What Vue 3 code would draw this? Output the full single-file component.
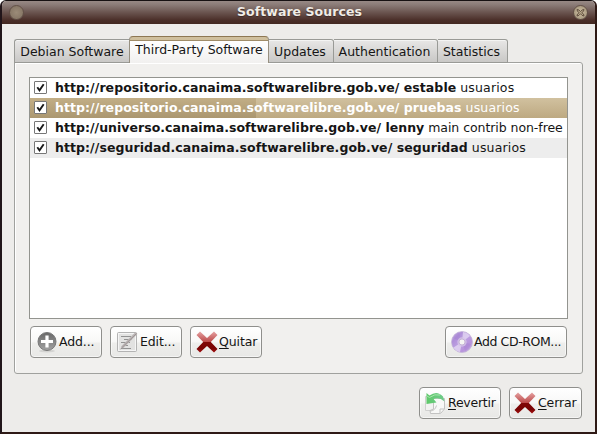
<script setup>
const tabs = [
  { name: 'Debian Software', id: 'debian' },
  { name: 'Third-Party Software', id: 'third', active: true },
  { name: 'Updates', id: 'updates' },
  { name: 'Authentication', id: 'auth' },
  { name: 'Statistics', id: 'stats' },
]
const sources = [
  { id: 'r1', url: 'http://repositorio.canaima.softwarelibre.gob.ve/ estable', parts: 'usuarios' },
  { id: 'r2', url: 'http://repositorio.canaima.softwarelibre.gob.ve/ pruebas', parts: 'usuarios', selected: true },
  { id: 'r3', url: 'http://universo.canaima.softwarelibre.gob.ve/ lenny', parts: 'main contrib non-free' },
  { id: 'r4', url: 'http://seguridad.canaima.softwarelibre.gob.ve/ seguridad', parts: 'usuarios' },
]
</script>

<template>
  <div class="desktop">
    <div class="window">
      <header class="titlebar">
        <span class="orb"></span>
        <span class="title">Software Sources</span>
        <span class="orb close">
          <svg width="15" height="15" viewBox="0 0 15 15"><path d="M4 4.500 6 5 7.500 6.700 9 5 11 4.500 10.300 6.500 8.700 7.700 10.500 9 11 11 9 10.300 7.500 8.700 6 10.300 4 11 4.500 9 6.300 7.700 4.600 6.500Z" fill="#b9a98b" stroke="#5b4a3b" stroke-width=".9" /></svg>
        </span>
      </header>

      <nav class="tabs">
        <div v-for="t in tabs" :key="t.id" class="tab" :class="[t.id, { active: t.active }]"><span>{{ t.name }}</span></div>
      </nav>

      <section class="panel">
        <div class="list">
          <div v-for="s in sources" :key="s.id" class="row" :class="[s.id, { selected: s.selected }]">
            <span class="check">
              <svg width="11" height="11" viewBox="0 0 11 11"><path d="M2.300 5.300 4.500 8.300 8.700 2.200" fill="none" stroke="#1a1a1a" stroke-width="1.900" /></svg>
            </span>
            <span class="text"><b>{{ s.url }}</b> <span class="parts">{{ s.parts }}</span></span>
          </div>
        </div>
        <div class="actions">
          <button class="btn add">
            <svg width="22" height="22" viewBox="0 0 22 22">
              <defs><linearGradient id="plusg" x1="0" y1="0" x2="0" y2="1"><stop offset="0" stop-color="#686868" /><stop offset="1" stop-color="#a2a2a2" /></linearGradient></defs>
              <ellipse cx="11" cy="20" rx="8" ry="1.500" fill="#d4d4d2" />
              <circle cx="11" cy="10.500" r="9" fill="url(#plusg)" stroke="#777" />
              <path d="M11 4.500V16.500M5 10.500H17" stroke="#fff" stroke-width="3.200" />
            </svg><span class="label">Add...</span>
          </button>
          <button class="btn edit">
            <svg width="22" height="22" viewBox="0 0 22 22">
              <rect x="1.500" y="1.500" width="19" height="19" rx="1" fill="#e2e2e1" stroke="#b3b3b3" />
              <rect x="2.500" y="2.500" width="17" height="17" fill="none" stroke="#f5f5f5" />
              <path d="M5 5.500H15M8 8.500H16M5 11.500H14M8 14.500H12M5 17.500H15" stroke="#929292" stroke-width="1" />
              <path d="M20.500 2 6 16.500" stroke="#bcb6b6" stroke-width="2.600" />
              <path d="M20.500 2.500 4.500 18" stroke="#9c9494" stroke-width="1" />
            </svg><span class="label">Edit...</span>
          </button>
          <button class="btn quit">
            <svg width="22" height="22" viewBox="0 0 22 22">
              <defs><linearGradient id="redx" x1="0" y1="0" x2="0" y2="1"><stop offset="0" stop-color="#e5a2a2" /><stop offset=".48" stop-color="#bd4b4b" /><stop offset=".52" stop-color="#7f0707" /><stop offset=".8" stop-color="#790303" /><stop offset="1" stop-color="#a51111" /></linearGradient></defs>
              <path d="M.5 4 4 .5 11 7 18 .5 21.500 4 14.800 11 21.500 18 18 21.500 11 15 4 21.500 .5 18 7.200 11Z" fill="url(#redx)" />
            </svg><span class="label"><i>Q</i>uitar</span>
          </button>
          <button class="btn cd">
            <svg width="22" height="22" viewBox="0 0 22 22">
              <defs><linearGradient id="disc" x1="0" y1="0" x2="1" y2="1"><stop offset="0" stop-color="#ded2f0" /><stop offset=".25" stop-color="#af8fd9" /><stop offset=".48" stop-color="#bda0e2" /><stop offset=".72" stop-color="#b894dc" /><stop offset="1" stop-color="#cdb8e6" /></linearGradient></defs>
              <circle cx="11" cy="11" r="10.500" fill="url(#disc)" stroke="#c2b3d6" stroke-width=".7" />
              <path d="M11 11 12 1A10 10 0 0 1 19 5ZM11 11 2.500 16.500A10 10 0 0 0 9 21Z" fill="#ede5f7" opacity=".65" />
              <path d="M11 11 2 7A10 10 0 0 1 8 1.500ZM11 11 20 13A10 10 0 0 1 14 20Z" fill="#9e7cce" opacity=".3" />
              <circle cx="11" cy="11" r="4.700" fill="#d6c5e7" opacity=".8" />
              <circle cx="11" cy="11" r="3" fill="#f5f5f3" stroke="#bca9cf" stroke-width=".8" />
            </svg><span class="label">Add CD-ROM...</span>
          </button>
        </div>
      </section>

      <footer class="footer">
        <button class="btn revert">
          <svg width="22" height="22" viewBox="0 0 22 22">
            <defs><linearGradient id="green" x1="0" y1="0" x2="1" y2="0"><stop offset="0" stop-color="#5fc96a" /><stop offset="1" stop-color="#6fca8b" /></linearGradient></defs>
            <path d="M1.500 4.500H10V18.500H1.500Z" fill="#f2f2f1" stroke="#d0d0cf" />
            <path d="M9.500 6.500H20.500V17L16.500 21.500H6.500L6 18.500 9.500 17Z" fill="#f8f8f7" stroke="#c3c3c2" />
            <path d="M20 17H16V21M6 19Q11 19 12.500 13.500" fill="none" stroke="#c3c3c2" />
            <path d="M2.500 1 5.500 3.500Q13-2 19 4.500L20.500 9.500Q15 4.500 9.500 7L12.500 10.500 2.500 12Z" fill="url(#green)" />
            <path d="M3 4 5.500 5.500Q11 1.500 16 3" fill="none" stroke="#a5e5aa" />
          </svg><span class="label"><i>R</i>evertir</span>
        </button>
        <button class="btn shut">
          <svg width="22" height="22" viewBox="0 0 22 22"><path d="M.5 4 4 .5 11 7 18 .5 21.500 4 14.800 11 21.500 18 18 21.500 11 15 4 21.500 .5 18 7.200 11Z" fill="url(#redx)" /></svg><span class="label"><i>C</i>errar</span>
        </button>
      </footer>
    </div>
  </div>
</template>

<style>
body { margin: 0; overflow: hidden; }
</style>

<style scoped>
.desktop { width: 597px; height: 434px; box-sizing: border-box; background: linear-gradient(#fff 0 6px, #170f0e 6px); font: 12.5px/20px "DejaVu Sans", sans-serif; color: #151515; }
.window { height: 434px; box-sizing: border-box; border: 2px solid #2f1a16; border-top: 1px solid #171112; border-left-color: #21151a; border-radius: 6px 6px 0 0; background: #edecea; overflow: hidden; }
.titlebar { height: 23px; box-sizing: border-box; padding: 0 7px; display: flex; align-items: center; justify-content: space-between; background: linear-gradient(#978985 0, #8c7d79 15%, #6a544f 50%, #4a2e28 84%, #432821); }
.title { position: relative; left: 1px; top: -1px; font-weight: bold; line-height: 20px; letter-spacing: .06px; color: #f0ece6; text-shadow: 0 1px 1px #3c2823; }
.orb { width: 13px; height: 13px; border: 1px solid #625047; border-radius: 50%; background: radial-gradient(#9b8b78, #807060); }
.orb.close { background: radial-gradient(#d0c1a3, #9a8b74); }
.orb svg { display: block; margin: -1px; }
.tabs { height: 26px; margin: 13px 0 0 12px; display: flex; align-items: flex-end; position: relative; z-index: 1; }
.tab { box-sizing: border-box; height: 24px; border: 1px solid #999a96; border-left-width: 0; border-radius: 0 3px 0 0; background: linear-gradient(#e8e7e6, #c9c8c6); line-height: 23px; padding-right: 2px; text-align: center; white-space: nowrap; box-shadow: inset 0 1px #f4f4f3; }
.tab.debian { width: 115px; padding-right: 0; border-left-width: 1px; border-radius: 3px 0 0; border-right-width: 0; }
.tab.third { width: 140px; padding-right: 0; }
.tab.updates { width: 65px; }
.tab.auth { width: 104px; }
.tab.stats { width: 70px; }
.tab.active { height: 27px; border: 1px solid #979081; border-top-color: #8d7753; border-bottom: 0; border-radius: 4px 4px 0 0; background: linear-gradient(#cfbf9d 0 3px, #a08c68 3px 4px, #fff 4px, #f1f0ef); line-height: 25px; box-shadow: none; }
.panel { margin: -1px 12px 0 12px; height: 312px; box-sizing: border-box; border: 1px solid #a0a19e; border-radius: 0 3px 3px 3px; padding: 14px; background: #f1f0ee; box-shadow: inset 1px 1px #fff; }
.list { height: 242px; box-sizing: border-box; border: 1px solid #93948f; background: #fff; }
.row { height: 20px; display: flex; align-items: flex-start; padding-left: 4px; white-space: nowrap; }
.row.r4 { background: #ededed; }
.row.selected { color: #fff; background: linear-gradient(#c2ae86, #ab9770) 0 0 / 226px 100% no-repeat, linear-gradient(#d1c19f, #bda981); }
.check { width: 11px; height: 11px; margin-top: 3px; border: 1px solid #777; border-radius: 1px; background: #fff; margin-right: 8px; }
.check svg { display: block; }
.text { line-height: 19px; }
.text b { letter-spacing: .065px; }
.r3 b { letter-spacing: .03px; }
.parts { letter-spacing: .16px; }
.r3 .parts { letter-spacing: -.06px; }
.actions { margin-top: 7px; display: flex; gap: 8px; padding: 0 1px; }
.btn { height: 32px; box-sizing: border-box; padding: 0 0 0 5px; border: 1px solid #8f8f8c; border-radius: 4px; display: flex; align-items: center; background: linear-gradient(#fff, #f8f8f7 48%, #eeeeec 55%, #e8e8e6); color: #151515; font: inherit; white-space: nowrap; box-shadow: inset 0 0 0 1px #ffffff90; }
.btn svg { flex: none; margin-right: 1px; }
.label { line-height: 20px; letter-spacing: -.12px; }
.cd .label { letter-spacing: -.4px; }
.edit .label { padding-left: 1px; }
.revert .label { letter-spacing: -.25px; }
.label i { font-style: normal; text-decoration: underline; text-underline-offset: 2px; text-decoration-skip-ink: none; }
.add, .edit, .quit { width: 72px; }
.cd { width: 122px; margin-left: auto; }
.footer { display: flex; justify-content: flex-end; gap: 8px; padding: 13px 13px 0 0; }
.revert { width: 82px; }
.shut { width: 73px; }
.revert svg, .shut svg { position: relative; left: -1px; }
</style>
